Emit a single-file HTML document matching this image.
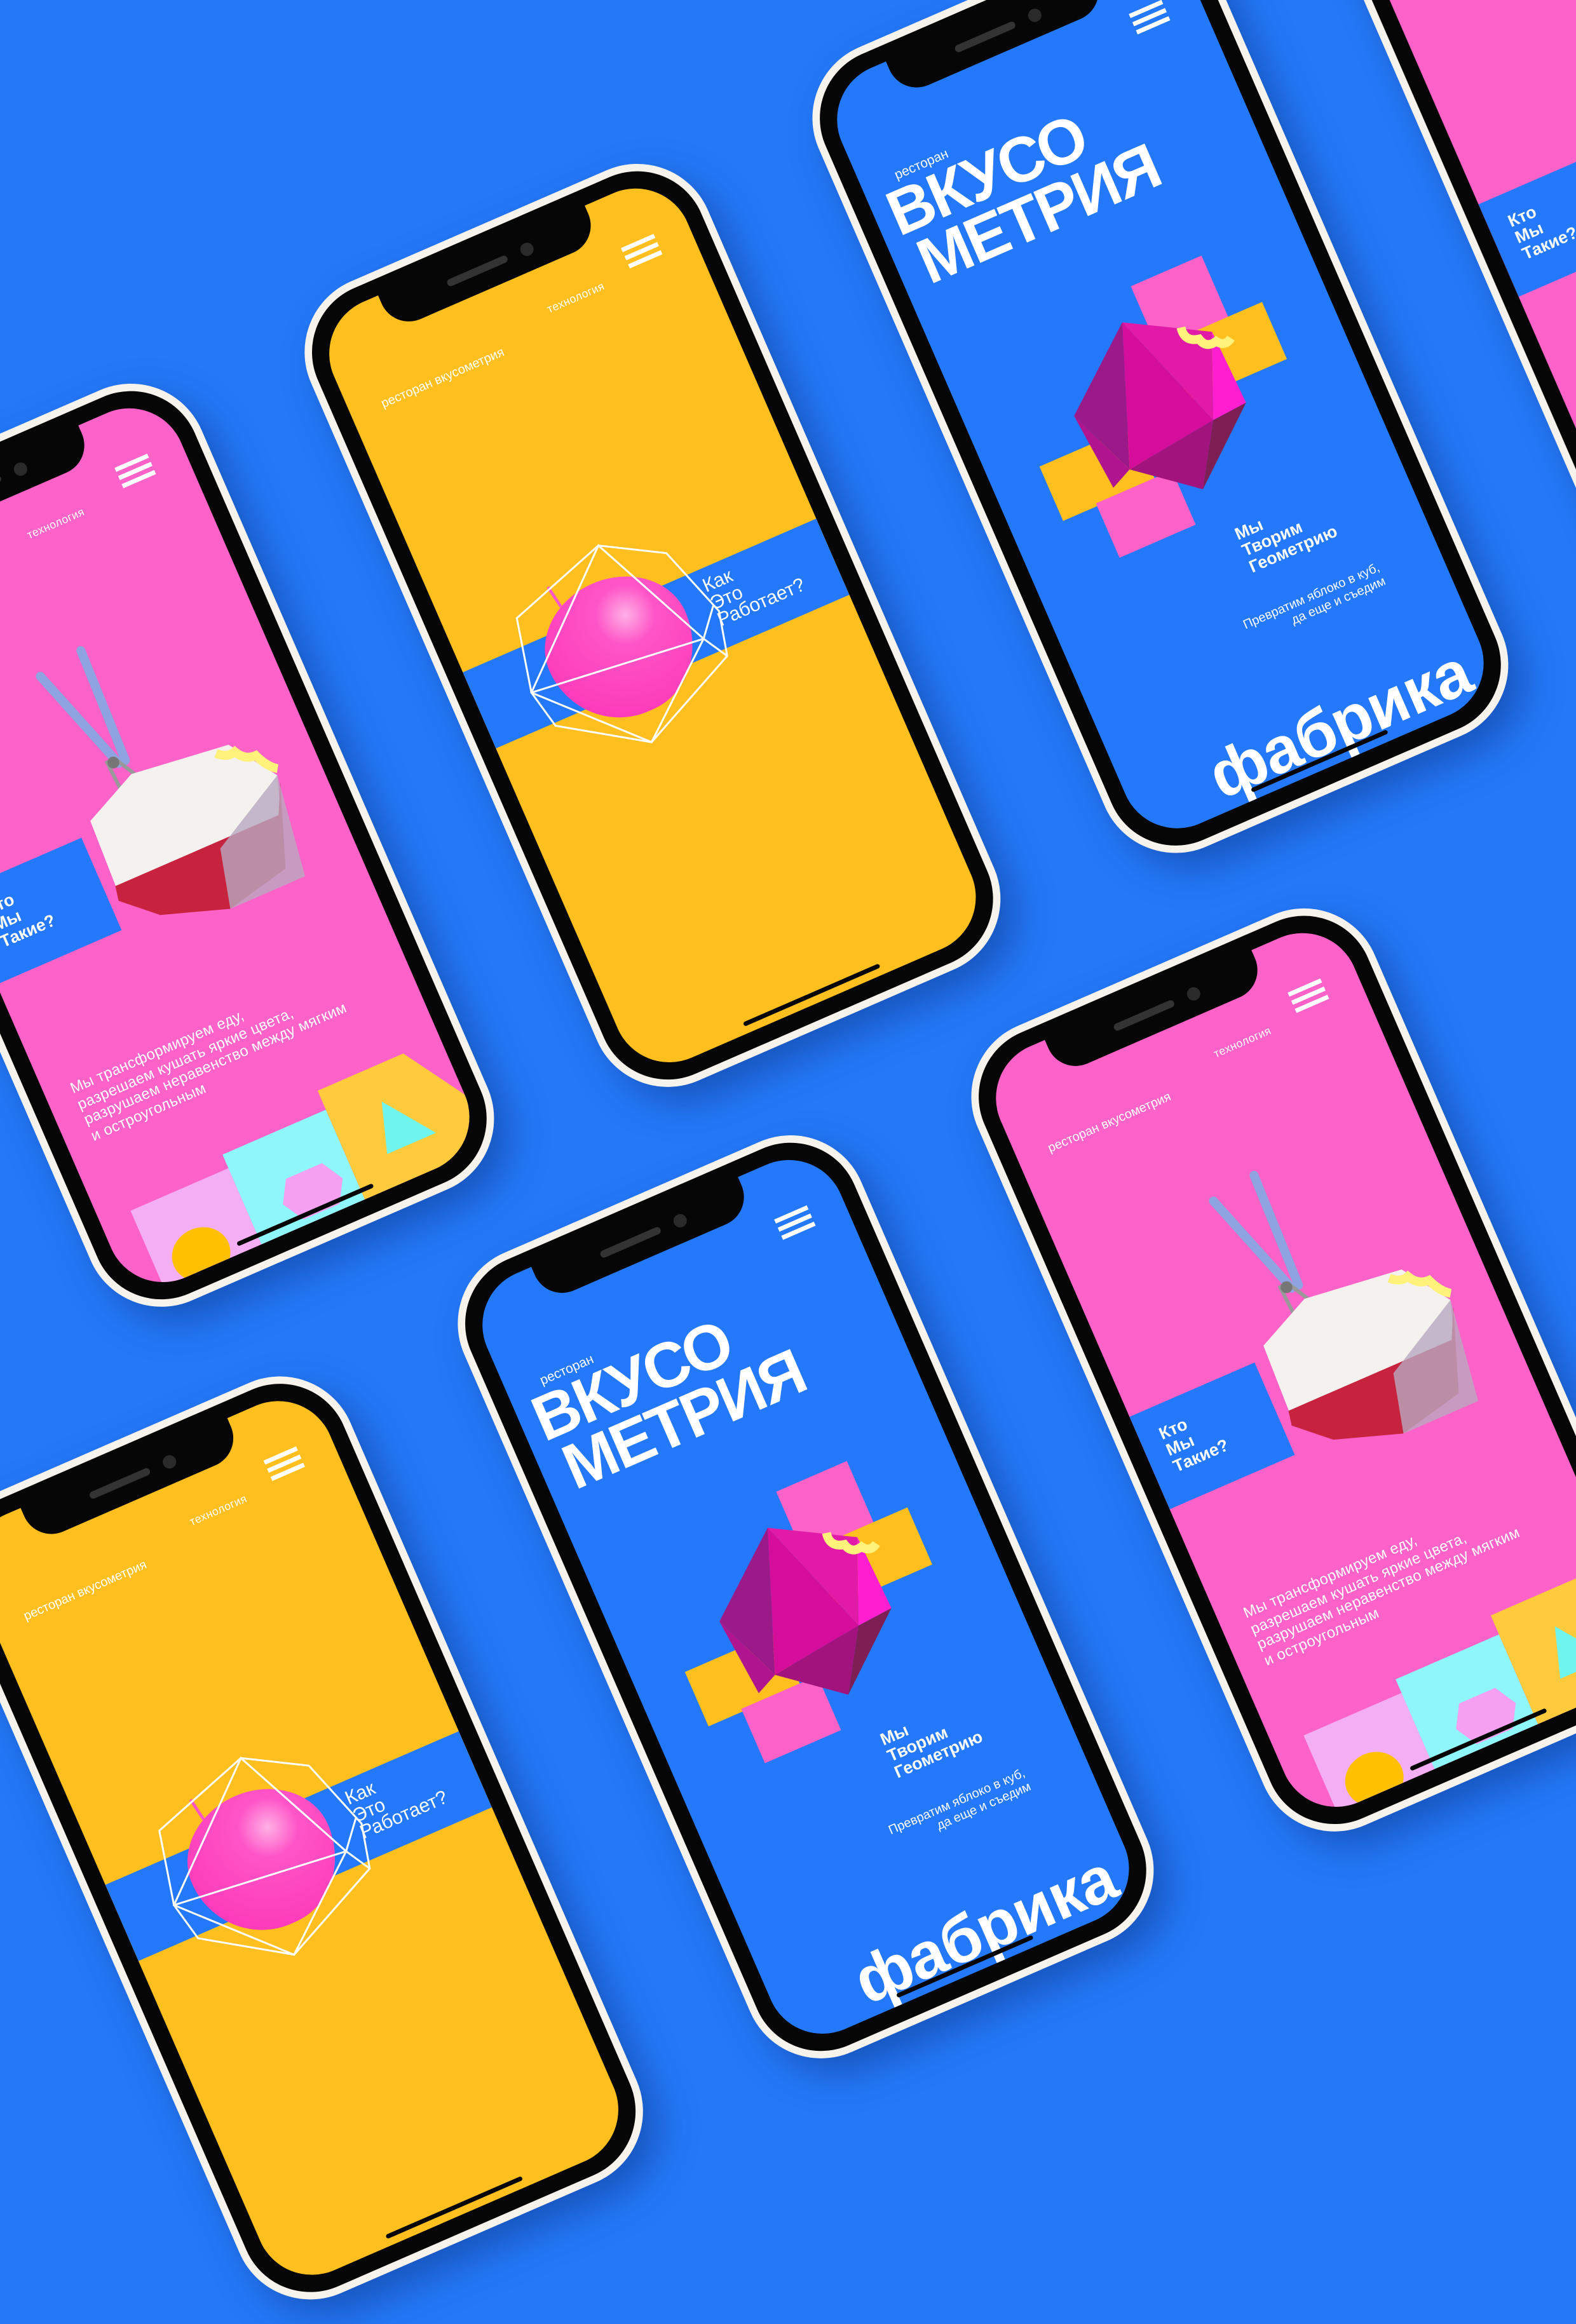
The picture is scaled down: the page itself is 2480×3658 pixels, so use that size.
<!DOCTYPE html>
<html><head><meta charset="utf-8">
<style>
html,body{margin:0;padding:0;}
body{width:2480px;height:3500px;overflow:hidden;background:#2479f9;}
#w{position:absolute;left:0;top:0;width:1111px;height:1568px;transform:scale(2.2322);transform-origin:0 0;font-family:"Liberation Sans","DejaVu Sans",sans-serif;}
.ph{position:absolute;width:292px;height:588px;box-sizing:border-box;background:#060606;border:5px solid #f6f3ec;border-radius:52px;transform:rotate(-23.5deg) scale(1.045);box-shadow:6px 14px 26px rgba(0,20,80,.35);}
.scr{position:absolute;left:11px;top:11px;width:260px;height:556px;border-radius:38px;overflow:hidden;}
.y{background:#ffbf1f}.b{background:#2479fa}.p{background:#fc62c8}
.notch{position:absolute;left:60px;top:10px;width:152px;height:27px;background:#060606;border-radius:0 0 20px 20px;}
.notch:before{content:"";position:absolute;left:46px;top:10px;width:44px;height:5px;border-radius:3px;background:#333;}
.notch:after{content:"";position:absolute;left:100px;top:8px;width:9px;height:9px;border-radius:50%;background:#2a2a2a;}
.home{position:absolute;left:90px;bottom:16px;width:100px;height:3.5px;border-radius:2px;background:#050505;}
.t{position:absolute;color:#fff;white-space:nowrap;}
.hb{position:absolute;left:212px;top:36px;width:24px;}
.hb i{display:block;height:2.6px;background:#fff;margin-bottom:3.6px;}
.sm{font-size:7.6px;letter-spacing:.2px}
.apple{position:absolute;left:54px;top:236px;width:100px;height:94px;border-radius:50% 50% 46% 50% / 45% 45% 55% 55%;background:radial-gradient(circle at 62% 30%,#ffb0e6 0,#ff55c8 22%,#fb2fb4 100%)}
.stem{position:absolute;left:76px;top:226px;width:2px;height:16px;background:#ff55c8;transform:rotate(-10deg)}
</style></head><body><div id="w">

<!-- pink left -->
<div class="ph" style="left:-43px;top:302px">
 <div class="scr p">
  <div class="hb"><i></i><i></i><i></i></div>
  <div class="t sm" style="left:140px;top:50px">технология</div>
  <svg style="position:absolute;left:80px;top:130px" width="160" height="220" viewBox="0 0 160 220">
   <path d="M30 15 L55 90" stroke="#8fa3e0" stroke-width="6" stroke-linecap="round"/>
   <path d="M62 10 L60 90" stroke="#8fa3e0" stroke-width="6" stroke-linecap="round"/>
   <path d="M48 85 L52 150 M55 88 L85 142" stroke="#999" stroke-width="2.5"/>
   <circle cx="52" cy="88" r="4" fill="#777"/>
   <polygon points="22,118 60,100 128,108 150,140 140,170 20,170" fill="#f4f1ee"/>
   <polygon points="20,165 140,165 150,145 130,200 85,210 40,195 18,175" fill="#c8233e"/>
   <polygon points="95,170 150,140 140,210 85,210" fill="#b9a9c0" opacity=".8"/>
   <path d="M118 110 q6 6 12 4 q4 8 12 8 q4 10 10 14" stroke="#fff27a" stroke-width="6" fill="none"/>
  </svg>
  <div style="position:absolute;left:0;top:256px;width:92px;height:68px;background:#2479fa"></div>
  <div class="t" style="left:14px;top:270px;font-size:11.5px;font-weight:bold;line-height:12px">Кто<br>Мы<br>Такие?</div>
  <div class="t" style="left:18px;top:404px;font-size:10.2px;line-height:11.5px;letter-spacing:.2px">Мы трансформируем еду,<br>разрешаем кушать яркие цвета,<br>разрушаем неравенство между мягким<br>и остроугольным</div>
  <div style="position:absolute;left:22px;top:500px;width:72px;height:60px;background:#f4aef4"></div>
  <div style="position:absolute;left:94px;top:490px;width:76px;height:70px;background:#8ff7fa"></div>
  <div style="position:absolute;left:170px;top:476px;width:90px;height:84px;background:#ffcb3d;clip-path:polygon(0 0,70% 0,100% 50%,100% 100%,0 100%)"></div>
  <div style="position:absolute;left:34px;top:528px;width:40px;height:36px;border-radius:50%;background:#ffc000"></div>
  <div style="position:absolute;left:118px;top:522px;width:44px;height:30px;background:#f5a0f0;clip-path:polygon(20% 0,80% 0,100% 50%,80% 100%,20% 100%,0 50%)"></div>
  <div style="position:absolute;left:196px;top:500px;width:36px;height:34px;background:#6ff5ee;clip-path:polygon(30% 0,100% 100%,0 100%)"></div>
 </div>
 <div class="notch"></div><div class="home"></div>
</div>

<!-- yellow top -->
<div class="ph" style="left:314px;top:147px">
 <div class="scr y">
  <div class="hb"><i></i><i></i><i></i></div>
  <div class="t sm" style="left:150px;top:50px">технология</div>
  <div class="t" style="left:22px;top:63px;font-size:8.6px">ресторан вкусометрия</div>
  <div style="position:absolute;left:0;top:256px;width:260px;height:56px;background:#2479fa"></div>
  <div class="stem"></div><div class="apple"></div>
  <svg style="position:absolute;left:23px;top:202px" width="160" height="160" viewBox="-80 -80 160 160" fill="none" stroke="#fff" stroke-width="1.3">
   <polygon points="-55,-45 15,-68 55,-45 72,5 65,35 -5,68 -60,32 -66,5"/>
   <path d="M-66 5 L55 18 L15 -68 L-66 5 L-5 68 L55 18 L65 35 M55 18 L70 0"/>
  </svg>
  <div class="t" style="left:172px;top:262px;font-size:13px;line-height:12.5px">Как<br>Это<br>Работает?</div>
 </div>
 <div class="notch"></div><div class="home"></div>
</div>

<!-- blue top -->
<div class="ph" style="left:672px;top:-18px">
 <div class="scr b">
  <div class="hb"><i></i><i></i><i></i></div>
  <div class="t" style="left:24px;top:68px;font-size:9px">ресторан</div>
  <div class="t" style="left:10px;top:79px;font-size:43px;font-weight:bold;line-height:38px;letter-spacing:-1.5px">ВКУСО<br><span style="margin-left:6px">МЕТРИЯ</span></div>
  <svg style="position:absolute;left:30px;top:200px" width="190" height="170" viewBox="0 0 190 170">
   <rect x="110" y="5" width="52" height="46" fill="#fc62c8"/>
   <rect x="115" y="50" width="72" height="42" fill="#ffbf1f"/>
   <rect x="5" y="92" width="68" height="40" fill="#ffbf1f"/>
   <rect x="30" y="130" width="56" height="40" fill="#fc62c8"/>
   <polygon points="40,70 95,25 60,118" fill="#9a1a8a"/>
   <polygon points="95,25 148,55 125,110" fill="#e11aa8"/>
   <polygon points="95,25 125,110 60,118" fill="#d40d9a"/>
   <polygon points="148,55 150,108 125,110" fill="#ff1fd0"/>
   <polygon points="60,118 125,110 100,150" fill="#a3137d"/>
   <polygon points="125,110 150,108 100,150" fill="#7d1f55"/>
   <polygon points="40,70 60,118 45,125" fill="#b0158f"/>
   <path d="M130 44 q-2 10 8 12 q2 8 10 6 q4 6 10 2" stroke="#fff27a" stroke-width="6" fill="none"/>
  </svg>
  <div class="t" style="left:138px;top:382px;font-size:11.5px;font-weight:bold;line-height:12px">Мы<br>Творим<br>Геометрию</div>
  <div class="t" style="left:90px;top:440px;width:128px;text-align:right;font-size:8.6px;line-height:10px">Превратим яблоко в куб,<br>да еще и съедим</div>
  <div class="t" style="left:58px;top:508px;font-size:44px;font-weight:bold;letter-spacing:-.5px">фабрика</div>
 </div>
 <div class="notch"></div><div class="home"></div>
</div>

<!-- far right pink -->
<div class="ph" style="left:1030px;top:-183px">
 <div class="scr p">
  <div style="position:absolute;left:0;top:256px;width:92px;height:68px;background:#2479fa"></div>
  <div class="t" style="left:14px;top:270px;font-size:11.5px;font-weight:bold;line-height:12px">Кто<br>Мы<br>Такие?</div>
 </div>
 <div class="notch"></div><div class="home"></div>
</div>

<!-- yellow bottom -->
<div class="ph" style="left:62px;top:1002px">
 <div class="scr y">
  <div class="hb"><i></i><i></i><i></i></div>
  <div class="t sm" style="left:150px;top:50px">технология</div>
  <div class="t" style="left:22px;top:63px;font-size:8.6px">ресторан вкусометрия</div>
  <div style="position:absolute;left:0;top:256px;width:260px;height:56px;background:#2479fa"></div>
  <div class="stem"></div><div class="apple"></div>
  <svg style="position:absolute;left:23px;top:202px" width="160" height="160" viewBox="-80 -80 160 160" fill="none" stroke="#fff" stroke-width="1.3">
   <polygon points="-55,-45 15,-68 55,-45 72,5 65,35 -5,68 -60,32 -66,5"/>
   <path d="M-66 5 L55 18 L15 -68 L-66 5 L-5 68 L55 18 L65 35 M55 18 L70 0"/>
  </svg>
  <div class="t" style="left:172px;top:262px;font-size:13px;line-height:12.5px">Как<br>Это<br>Работает?</div>
 </div>
 <div class="notch"></div><div class="home"></div>
</div>

<!-- blue mid -->
<div class="ph" style="left:422px;top:832px">
 <div class="scr b">
  <div class="hb"><i></i><i></i><i></i></div>
  <div class="t" style="left:24px;top:68px;font-size:9px">ресторан</div>
  <div class="t" style="left:10px;top:79px;font-size:43px;font-weight:bold;line-height:38px;letter-spacing:-1.5px">ВКУСО<br><span style="margin-left:6px">МЕТРИЯ</span></div>
  <svg style="position:absolute;left:30px;top:200px" width="190" height="170" viewBox="0 0 190 170">
   <rect x="110" y="5" width="52" height="46" fill="#fc62c8"/>
   <rect x="115" y="50" width="72" height="42" fill="#ffbf1f"/>
   <rect x="5" y="92" width="68" height="40" fill="#ffbf1f"/>
   <rect x="30" y="130" width="56" height="40" fill="#fc62c8"/>
   <polygon points="40,70 95,25 60,118" fill="#9a1a8a"/>
   <polygon points="95,25 148,55 125,110" fill="#e11aa8"/>
   <polygon points="95,25 125,110 60,118" fill="#d40d9a"/>
   <polygon points="148,55 150,108 125,110" fill="#ff1fd0"/>
   <polygon points="60,118 125,110 100,150" fill="#a3137d"/>
   <polygon points="125,110 150,108 100,150" fill="#7d1f55"/>
   <polygon points="40,70 60,118 45,125" fill="#b0158f"/>
   <path d="M130 44 q-2 10 8 12 q2 8 10 6 q4 6 10 2" stroke="#fff27a" stroke-width="6" fill="none"/>
  </svg>
  <div class="t" style="left:138px;top:382px;font-size:11.5px;font-weight:bold;line-height:12px">Мы<br>Творим<br>Геометрию</div>
  <div class="t" style="left:90px;top:440px;width:128px;text-align:right;font-size:8.6px;line-height:10px">Превратим яблоко в куб,<br>да еще и съедим</div>
  <div class="t" style="left:58px;top:508px;font-size:44px;font-weight:bold;letter-spacing:-.5px">фабрика</div>
 </div>
 <div class="notch"></div><div class="home"></div>
</div>

<!-- pink right -->
<div class="ph" style="left:784px;top:672px">
 <div class="scr p">
  <div class="hb"><i></i><i></i><i></i></div>
  <div class="t sm" style="left:150px;top:50px">технология</div>
  <div class="t" style="left:22px;top:63px;font-size:8.6px">ресторан вкусометрия</div>
  <svg style="position:absolute;left:80px;top:130px" width="160" height="220" viewBox="0 0 160 220">
   <path d="M30 15 L55 90" stroke="#8fa3e0" stroke-width="6" stroke-linecap="round"/>
   <path d="M62 10 L60 90" stroke="#8fa3e0" stroke-width="6" stroke-linecap="round"/>
   <path d="M48 85 L52 150 M55 88 L85 142" stroke="#999" stroke-width="2.5"/>
   <circle cx="52" cy="88" r="4" fill="#777"/>
   <polygon points="22,118 60,100 128,108 150,140 140,170 20,170" fill="#f4f1ee"/>
   <polygon points="20,165 140,165 150,145 130,200 85,210 40,195 18,175" fill="#c8233e"/>
   <polygon points="95,170 150,140 140,210 85,210" fill="#b9a9c0" opacity=".8"/>
   <path d="M118 110 q6 6 12 4 q4 8 12 8 q4 10 10 14" stroke="#fff27a" stroke-width="6" fill="none"/>
  </svg>
  <div style="position:absolute;left:0;top:256px;width:92px;height:68px;background:#2479fa"></div>
  <div class="t" style="left:14px;top:270px;font-size:11.5px;font-weight:bold;line-height:12px">Кто<br>Мы<br>Такие?</div>
  <div class="t" style="left:18px;top:404px;font-size:10.2px;line-height:11.5px;letter-spacing:.2px">Мы трансформируем еду,<br>разрешаем кушать яркие цвета,<br>разрушаем неравенство между мягким<br>и остроугольным</div>
  <div style="position:absolute;left:22px;top:500px;width:72px;height:60px;background:#f4aef4"></div>
  <div style="position:absolute;left:94px;top:490px;width:76px;height:70px;background:#8ff7fa"></div>
  <div style="position:absolute;left:170px;top:476px;width:90px;height:84px;background:#ffcb3d;clip-path:polygon(0 0,70% 0,100% 50%,100% 100%,0 100%)"></div>
  <div style="position:absolute;left:34px;top:528px;width:40px;height:36px;border-radius:50%;background:#ffc000"></div>
  <div style="position:absolute;left:118px;top:522px;width:44px;height:30px;background:#f5a0f0;clip-path:polygon(20% 0,80% 0,100% 50%,80% 100%,20% 100%,0 50%)"></div>
  <div style="position:absolute;left:196px;top:500px;width:36px;height:34px;background:#6ff5ee;clip-path:polygon(30% 0,100% 100%,0 100%)"></div>
 </div>
 <div class="notch"></div><div class="home"></div>
</div>

</div></body></html>
